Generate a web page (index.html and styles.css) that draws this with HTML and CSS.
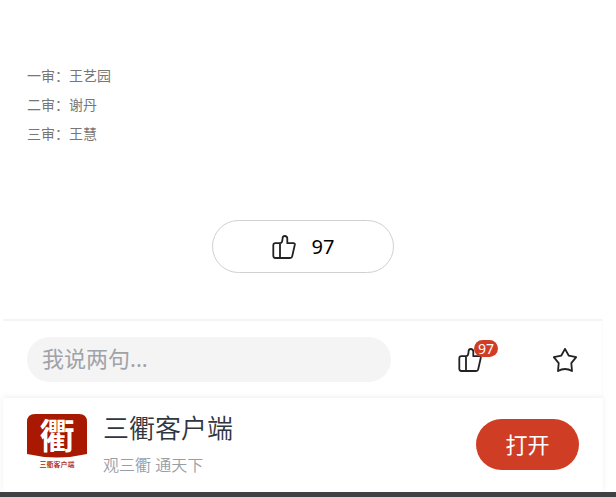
FILE: index.html
```html
<!DOCTYPE html>
<html lang="zh-CN">
<head>
    <meta charset="UTF-8">
    <meta name="viewport" content="width=device-width, initial-scale=1">
    <title>三衢客户端</title>
    <link rel="stylesheet" href="styles.css">
</head>
<body>
    <!-- Shared icon shapes -->
    <svg class="sprite" aria-hidden="true">
        <symbol id="icon-like" viewBox="0 0 24 24">
            <path d="M8 8.2V23M8 8.2H3.4C2 8.2 1.3 9 1.3 10.2V20.8C1.3 22.2 2.1 23 3.4 23H18C19.2 23 20 22.4 20.2 21.3L22.8 9.8C23 8.8 22.5 8.2 21.5 8.2H15.3V3.6C15.3 2 14.3 1 12.8 1C11.4 1 10.7 1.8 10.6 3.1C10.5 6 9.8 8.2 8 8.2Z"/>
        </symbol>
        <symbol id="icon-star" viewBox="0 0 24 24">
            <path d="M12 .9L15.8 7.7L23.2 9.2L18.3 15.1L19 23.1Q12 18.9 5 23.1L5.7 15.1L.8 9.2L8.2 7.7Z"/>
        </symbol>
    </svg>

    <main class="page">
        <div class="article">
            <p>一审：王艺园</p>
            <p>二审：谢丹</p>
            <p>三审：王慧</p>
        </div>

        <button type="button" class="like-btn" aria-label="点赞 97">
            <svg class="icon"><use href="#icon-like"/></svg>
            <span>97</span>
        </button>

        <form class="comment-bar">
            <input type="text" class="comment-input" placeholder="我说两句..." aria-label="评论">
            <div class="actions">
                <button type="button" class="action" aria-label="点赞">
                    <svg class="icon"><use href="#icon-like"/></svg>
                    <span class="badge">97</span>
                </button>
                <button type="button" class="action" aria-label="收藏">
                    <svg class="icon"><use href="#icon-star"/></svg>
                </button>
            </div>
        </form>

        <div class="app-bar">
            <svg class="app-logo" viewBox="0 0 60 60" aria-hidden="true">
                <path d="M0 8Q0 0 8 0H52Q60 0 60 8V40Q30 47 0 40Z" fill="#a91800"/>
                <text class="logo-mark" x="30" y="35" text-anchor="middle">衢</text>
                <text class="logo-name" x="30" y="53" text-anchor="middle">三衢客户端</text>
            </svg>
            <div class="app-info">
                <h1>三衢客户端</h1>
                <p>观三衢 通天下</p>
            </div>
            <button type="button" class="open-btn">打开</button>
        </div>
    </main>
    <footer class="bottom-strip"></footer>
</body>
</html>
```

FILE: styles.css
```css
* {
    box-sizing: border-box;
}
body {
    margin: 0;
    background-color: #fff;
    font-family: "Noto Sans", "Noto Sans CJK SC", sans-serif;
    color: #000;
}
p, h1 {
    margin: 0;
}
button, input {
    font-family: inherit;
    border: none;
    padding: 0;
}
button {
    background: none;
    cursor: pointer;
}
.sprite {
    display: none;
}
.icon {
    display: block;
    width: 24px;
    height: 24px;
    fill: none;
    stroke: #222;
    stroke-width: 1.8;
    stroke-linejoin: round;
}

.page {
    margin: 0 13px 0 3px;
    padding-top: 61px;
}
.article {
    padding: 0 24px;
    font-family: "Noto Sans CJK SC", sans-serif;
    font-size: 14px;
    line-height: 29px;
    color: #777;
}

.like-btn {
    display: flex;
    align-items: center;
    justify-content: center;
    gap: 16px;
    width: 182px;
    height: 53px;
    margin: 72px auto 46px;
    border: 1px solid #d0d0d0;
    border-radius: 27px;
    font-size: 20px;
    color: #000;
}

.comment-bar {
    display: flex;
    align-items: center;
    padding: 16px 24px;
    border-top: 2px solid #f4f4f4;
    border-right: 1px solid #fafafa;
}
.comment-input {
    flex: 1;
    min-width: 0;
    height: 45px;
    padding: 0 15px 3px;
    border-radius: 23px;
    background-color: #f4f4f4;
    font-size: 22px;
}
.comment-input::placeholder {
    color: #9fa3a9;
}
.actions {
    display: flex;
    gap: 71px;
    margin: 0 1px 0 67px;
}
.action {
    position: relative;
}
.badge {
    position: absolute;
    top: -8px;
    left: 16px;
    width: 24px;
    height: 17px;
    border-radius: 9px;
    background-color: #cf3e24;
    color: #fff;
    font-size: 14px;
    line-height: 17px;
    text-align: center;
}

.app-bar {
    display: flex;
    align-items: center;
    height: 94px;
    padding: 0 24px 2px;
    box-shadow: 0 -1px 6px rgba(0, 0, 0, 0.07);
    background-color: #fff;
}
.app-logo {
    width: 60px;
    height: 60px;
    overflow: visible;
}
.logo-mark {
    font-family: "Noto Sans CJK SC", sans-serif;
    font-size: 35px;
    font-weight: 700;
    fill: #fff;
}
.logo-name {
    font-family: "Noto Sans CJK SC", sans-serif;
    font-size: 7px;
    font-weight: 500;
    fill: #a91800;
}
.app-info {
    flex: 1;
    margin-left: 16px;
    padding-top: 4px;
}
.app-info h1 {
    font-size: 26px;
    font-weight: 350;
    line-height: 38px;
    color: #30363e;
}
.app-info p {
    font-size: 16px;
    font-weight: 350;
    line-height: 36px;
    color: #999ea5;
}
.open-btn {
    width: 103px;
    height: 51px;
    padding-bottom: 2px;
    border-radius: 26px;
    background-color: #cf3e24;
    color: #fff;
    font-size: 22px;
}
.bottom-strip {
    height: 5px;
    background-color: #414143;
}
```
